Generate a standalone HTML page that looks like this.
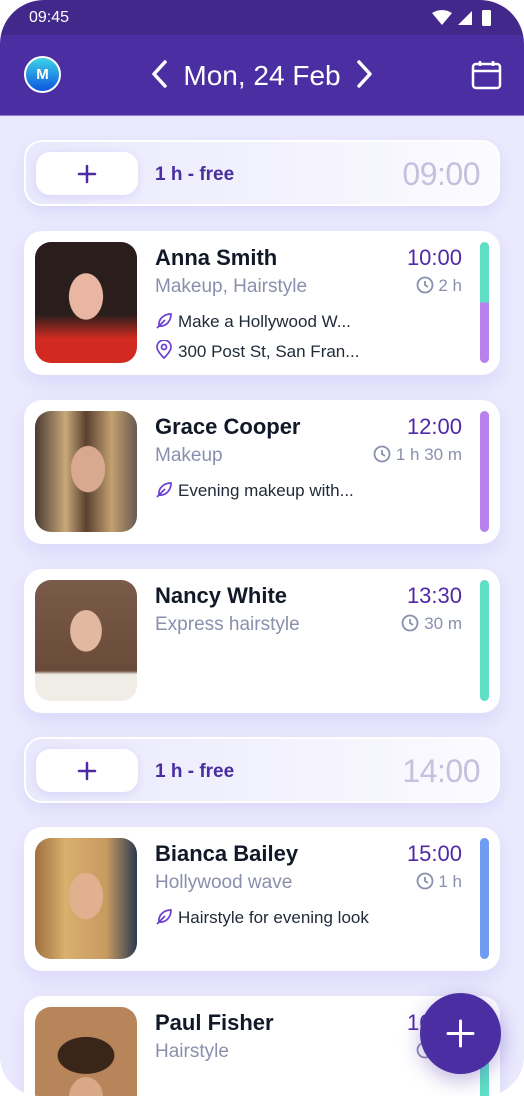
<!DOCTYPE html>
<html><head><meta charset="utf-8"><style>
*{box-sizing:border-box;margin:0;padding:0}
body{width:524px;height:1096px;background:#fff;font-family:"Liberation Sans",sans-serif;overflow:hidden;position:relative}
.phone{position:absolute;left:0;top:0;width:524px;height:1096px;border-radius:44px 44px 40px 40px;background:#ebeafd;overflow:hidden}
.status{position:absolute;left:0;top:0;width:524px;height:35px;background:#41288a;color:#fff;font-size:16px}
.hdr{position:absolute;left:0;top:35px;width:524px;height:81px;background:#4c2ea3;border-bottom:1px solid #8f7bd6}
.av{position:absolute;left:24px;top:56px;width:37px;height:37px;border-radius:50%;background:linear-gradient(#3ed3e6,#0b55e0);border:2px solid #fff;color:#fff;font-weight:bold;font-size:15px;text-align:center;line-height:33px}
.title{position:absolute;left:0;width:524px;top:58px;text-align:center;color:#fff;font-size:28px;line-height:36px}
.card{position:absolute;left:24px;width:476px;height:144px;background:#fff;border-radius:18px;box-shadow:0 8px 20px rgba(120,110,230,.15)}
.free{position:absolute;left:24px;width:476px;height:66px;border-radius:18px;border:2px solid #fff;background:linear-gradient(90deg,#e9e8fc,#fbfbff);box-shadow:0 6px 16px rgba(120,110,230,.15)}
.free .btn{position:absolute;left:10px;top:10px;width:102px;height:43px;border-radius:14px;background:#fff;box-shadow:0 2px 8px rgba(120,110,230,.18)}
.free .lbl{position:absolute;left:129px;top:22px;color:#4a2ea0;font-size:19px;font-weight:bold}
.free .tm{position:absolute;right:18px;top:14px;color:#c3c1de;font-size:32px;letter-spacing:-0.5px}
.ph{position:absolute;left:11px;top:11px;width:102px;height:121px;border-radius:16px;overflow:hidden}
.nm{position:absolute;left:131px;top:14px;font-size:22px;font-weight:bold;color:#111827}
.sub{position:absolute;left:131px;top:45px;font-size:19px;color:#8a8fad}
.t{position:absolute;right:38px;top:14px;font-size:22px;color:#4f2aa6}
.dur{position:absolute;right:38px;top:45px;font-size:17px;color:#8a8fad}
.ln{position:absolute;left:131px;font-size:17px;color:#1f2937}
.ln svg{vertical-align:-3px;margin-right:5px}
.bar{position:absolute;left:456px;top:11px;width:9px;height:121px;border-radius:5px}
.fab{position:absolute;left:420px;top:993px;width:81px;height:81px;border-radius:50%;background:#4c2ea3;box-shadow:0 6px 20px rgba(76,46,163,.35)}
</style></head><body><div class="phone">
<div class="status"><span style="position:absolute;left:29px;top:9px">09:45</span>
<svg style="position:absolute;left:430px;top:9px" width="66" height="18"><path d="M2 4 Q12-2 22 4 L12 16Z" fill="#fff"/><path d="M28 16 L42 2 L42 16Z" fill="#fff"/><rect x="52" y="1" width="9" height="16" rx="1.5" fill="#fff"/></svg></div>
<div class="hdr"></div>
<div class="av">M</div>
<div class="title"><svg width="20" height="28" style="vertical-align:-3px;margin-right:14px"><path d="M16 2 L5 14 L16 26" stroke="#fff" stroke-width="3.5" fill="none" stroke-linecap="round" stroke-linejoin="round"/></svg>Mon, 24 Feb<svg width="20" height="28" style="vertical-align:-3px;margin-left:14px"><path d="M4 2 L15 14 L4 26" stroke="#fff" stroke-width="3.5" fill="none" stroke-linecap="round" stroke-linejoin="round"/></svg></div>
<svg style="position:absolute;left:471px;top:60px" width="31" height="30"><rect x="2" y="4" width="27" height="24" rx="3" stroke="#fff" stroke-width="2.5" fill="none"/><path d="M2 11 H29 M9 1 V6 M22 1 V6" stroke="#fff" stroke-width="2.5"/></svg>

<div class="free" style="top:140px"><div class="btn"><svg width="102" height="43"><path d="M51 14V30 M43 22H59" stroke="#4f2aa6" stroke-width="2.5" stroke-linecap="round"/></svg></div><div class="lbl">1 h - free</div><div class="tm">09:00</div></div>

<div class="card" style="top:231px"><div class="ph" style="background:radial-gradient(ellipse 28px 38px at 50% 45%,#e8b6a2 60%,transparent 62%),linear-gradient(#2a1e1c 60%,#d22a20 80%)"></div>
<div class="nm">Anna Smith</div><div class="sub">Makeup, Hairstyle</div><div class="t">10:00</div>
<div class="dur"><svg width="18" height="18" style="vertical-align:-3px"><circle cx="9" cy="9" r="7.5" stroke="#8a8fad" stroke-width="1.8" fill="none"/><path d="M9 5V9L12 11" stroke="#8a8fad" stroke-width="1.8" fill="none"/></svg> 2 h</div>
<div class="ln" style="top:81px"><svg width="18" height="18"><path d="M2 16 L10 8 M4 14 C3 7 9 2 16 2 C16 9 11 15 4 14" stroke="#6b3fd0" stroke-width="1.7" fill="none"/></svg>Make a Hollywood W...</div>
<div class="ln" style="top:109px"><svg width="18" height="20"><path d="M9 18 C4 13 2 10 2 7 A7 7 0 0 1 16 7 C16 10 14 13 9 18Z" stroke="#6b3fd0" stroke-width="1.7" fill="none"/><circle cx="9" cy="7" r="2.5" stroke="#6b3fd0" stroke-width="1.7" fill="none"/></svg>300 Post St, San Fran...</div>
<div class="bar" style="background:linear-gradient(#5fe0c6 50%,#b981ec 50%)"></div></div>

<div class="card" style="top:400px"><div class="ph" style="background:radial-gradient(ellipse 28px 38px at 52% 48%,#d9a98f 60%,transparent 62%),linear-gradient(90deg,#4a3a32,#c9a87a 30%,#5a4030 50%,#c2a070 75%,#6a5a50)"></div>
<div class="nm">Grace Cooper</div><div class="sub">Makeup</div><div class="t">12:00</div>
<div class="dur"><svg width="18" height="18" style="vertical-align:-3px"><circle cx="9" cy="9" r="7.5" stroke="#8a8fad" stroke-width="1.8" fill="none"/><path d="M9 5V9L12 11" stroke="#8a8fad" stroke-width="1.8" fill="none"/></svg> 1 h 30 m</div>
<div class="ln" style="top:81px"><svg width="18" height="18"><path d="M2 16 L10 8 M4 14 C3 7 9 2 16 2 C16 9 11 15 4 14" stroke="#6b3fd0" stroke-width="1.7" fill="none"/></svg>Evening makeup with...</div>
<div class="bar" style="background:#b981ec"></div></div>

<div class="card" style="top:569px"><div class="ph" style="background:radial-gradient(ellipse 26px 34px at 50% 42%,#e2b8a0 60%,transparent 62%),linear-gradient(#7a5a48 0,#6a4a38 75%,#f0ece6 78%)"></div>
<div class="nm">Nancy White</div><div class="sub">Express hairstyle</div><div class="t">13:30</div>
<div class="dur"><svg width="18" height="18" style="vertical-align:-3px"><circle cx="9" cy="9" r="7.5" stroke="#8a8fad" stroke-width="1.8" fill="none"/><path d="M9 5V9L12 11" stroke="#8a8fad" stroke-width="1.8" fill="none"/></svg> 30 m</div>
<div class="bar" style="background:#5fe0c6"></div></div>

<div class="free" style="top:737px"><div class="btn"><svg width="102" height="43"><path d="M51 14V30 M43 22H59" stroke="#4f2aa6" stroke-width="2.5" stroke-linecap="round"/></svg></div><div class="lbl">1 h - free</div><div class="tm">14:00</div></div>

<div class="card" style="top:827px"><div class="ph" style="background:radial-gradient(ellipse 28px 38px at 50% 48%,#e0b08f 60%,transparent 62%),linear-gradient(90deg,#a07040,#d9b070 30%,#c89a60 70%,#2a3a50)"></div>
<div class="nm">Bianca Bailey</div><div class="sub">Hollywood wave</div><div class="t">15:00</div>
<div class="dur"><svg width="18" height="18" style="vertical-align:-3px"><circle cx="9" cy="9" r="7.5" stroke="#8a8fad" stroke-width="1.8" fill="none"/><path d="M9 5V9L12 11" stroke="#8a8fad" stroke-width="1.8" fill="none"/></svg> 1 h</div>
<div class="ln" style="top:81px"><svg width="18" height="18"><path d="M2 16 L10 8 M4 14 C3 7 9 2 16 2 C16 9 11 15 4 14" stroke="#6b3fd0" stroke-width="1.7" fill="none"/></svg>Hairstyle for evening look</div>
<div class="bar" style="background:#6f9cf0"></div></div>

<div class="card" style="top:996px"><div class="ph" style="background:radial-gradient(ellipse 28px 34px at 50% 75%,#d8a888 60%,transparent 62%),radial-gradient(ellipse 40px 26px at 50% 40%,#3a2618 70%,transparent 72%),#b8855a"></div>
<div class="nm">Paul Fisher</div><div class="sub">Hairstyle</div><div class="t">16:00</div>
<div class="dur"><svg width="18" height="18" style="vertical-align:-3px"><circle cx="9" cy="9" r="7.5" stroke="#8a8fad" stroke-width="1.8" fill="none"/><path d="M9 5V9L12 11" stroke="#8a8fad" stroke-width="1.8" fill="none"/></svg> 1 h</div>
<div class="bar" style="background:#5fe0c6"></div></div>

<div class="fab"><svg width="81" height="81"><path d="M40.5 28V53 M28 40.5H53" stroke="#fff" stroke-width="3" stroke-linecap="round"/></svg></div>
</div></body></html>
